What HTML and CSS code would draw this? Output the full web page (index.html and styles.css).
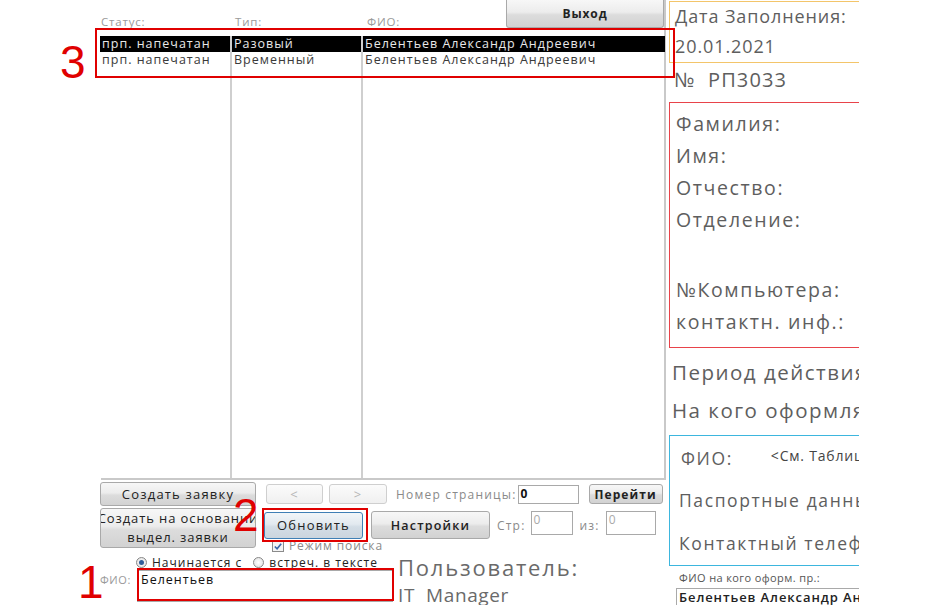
FILE: index.html
```html
<!DOCTYPE html>
<html lang="ru">
<head>
<meta charset="utf-8">
<title>Заявки</title>
<link rel="stylesheet" href="styles.css">
</head>
<body>
<div class="app">
  <div class="left">
    <div class="top">
      <div class="head">
        <div class="hl hl1">Статус:</div>
        <div class="hl hl2">Тип:</div>
        <div class="hl hl3">ФИО:</div>
        <button class="btn btn-exit">Выход</button>
      </div>
      <div class="grid">
        <div class="col c1">
          <div class="cell sel">прп. напечатан</div>
          <div class="cell">прп. напечатан</div>
        </div>
        <div class="col c2">
          <div class="cell sel">Разовый</div>
          <div class="cell">Временный</div>
        </div>
        <div class="col c3">
          <div class="cell sel">Белентьев Александр Андреевич</div>
          <div class="cell">Белентьев Александр Андреевич</div>
        </div>
      </div>
    </div>
    <div class="bottom">
      <div class="row1">
        <button class="btn btn-create">Создать заявку</button>
        <button class="btn btn-nav" disabled>&lt;</button>
        <button class="btn btn-nav btn-nav2" disabled>&gt;</button>
        <span class="lbl lbl-page">Номер страницы:</span>
        <div class="inp inp-page">0</div>
        <button class="btn btn-go">Перейти</button>
      </div>
      <div class="row2">
        <button class="btn btn-based">Создать на основании<br>выдел. заявки</button>
        <div class="row2r">
          <div class="row2btns">
            <button class="btn btn-refresh">Обновить</button>
            <button class="btn btn-settings">Настройки</button>
            <span class="lbl lbl-str">Стр:</span>
            <div class="inp inp-str">0</div>
            <span class="lbl lbl-iz">из:</span>
            <div class="inp inp-iz">0</div>
          </div>
          <div class="chkrow"><span class="chk"><svg width="11" height="11" viewBox="0 0 11 11"><path d="M2 5.5 L4.5 8 L9 2.5" fill="none" stroke="#3a66a8" stroke-width="1.8"/></svg></span><span class="chklbl">Режим поиска</span></div>
        </div>
      </div>
      <div class="row3">
        <div class="search">
          <div class="radios">
            <span class="radio on"></span><span class="rlbl">Начинается с</span>
            <span class="radio"></span><span class="rlbl">встреч. в тексте</span>
          </div>
          <div class="fio">
            <span class="fiolbl">ФИО:</span>
            <div class="inp inp-fio">Белентьев</div>
          </div>
        </div>
        <div class="user">
          <div class="user-t">Пользователь:</div>
          <div class="user-n">IT&nbsp; Manager</div>
        </div>
      </div>
    </div>
  </div>
  <div class="right">
    <div class="box box-date">
      <div class="d1">Дата Заполнения:</div>
      <div class="d2">20.01.2021</div>
    </div>
    <div class="num">№ &nbsp;РП3033</div>
    <div class="box box-person">
      <div class="pl">Фамилия:</div>
      <div class="pl">Имя:</div>
      <div class="pl">Отчество:</div>
      <div class="pl">Отделение:</div>
      <div class="pl pl-gap">№Компьютера:</div>
      <div class="pl">контактн. инф.:</div>
    </div>
    <div class="sec sec1">Период действия пропуска:</div>
    <div class="sec sec2">На кого оформляется:</div>
    <div class="box box-who">
      <div class="wrow"><span class="wl">ФИО:</span><span class="ws">&lt;См. Таблицу&gt;</span></div>
      <div class="wl wl2">Паспортные данные:</div>
      <div class="wl wl3">Контактный телефон:</div>
    </div>
    <div class="small">ФИО на кого оформ. пр.:</div>
    <div class="inp inp-who">Белентьев Александр Андреевич</div>
  </div>

  <div class="mark mark3"></div>
  <div class="digit d-3">3</div>
  <div class="mark mark2"></div>
  <div class="digit d-2">2</div>
  <div class="mark mark1"></div>
  <div class="digit d-1">1</div>
</div>
</body>
</html>
```

FILE: styles.css
```css
* { box-sizing: border-box; }
html, body { margin: 0; padding: 0; background: #fff; }
body {
  width: 937px; height: 605px; overflow: hidden;
  font-family: "Open Sans", "Noto Sans", sans-serif;
  font-size: 12px; color: #333;
}
.app {
  position: relative;
  display: flex;
  width: 937px; height: 605px;
  padding-left: 100px;
}
.left { width: 566px; display: flex; flex-direction: column; }
.top { border-right: 2px solid #c9c9c9; }
.head {
  display: grid;
  grid-template-columns: 129px 131px 146px 158px;
  height: 35px;
}
.hl {
  align-self: end;
  font-size: 11.5px; color: #9a9a9a; letter-spacing: 0.8px;
  line-height: 14px; padding-bottom: 6px;
}
.hl1 { padding-left: 1px; }
.hl2 { padding-left: 6px; }
.hl3 { padding-left: 7px; }
.btn {
  font-family: inherit; font-size: 13px; color: #222; letter-spacing: 1.2px;
  border: 1px solid #a9a9a9; border-radius: 3px;
  background: linear-gradient(#f7f7f7, #ececec 45%, #dcdcdc 55%, #d2d2d2);
  padding: 0; margin: 0;
  display: flex; align-items: center; justify-content: center;
}
.btn-exit { height: 28px; font-weight: 700; font-size: 12px; letter-spacing: 0.9px; border-top: none; border-radius: 0 0 3px 3px; }
.grid {
  display: grid;
  grid-template-columns: 129px 131px 304px;
  height: 445px;
  border-bottom: 2px solid #c9c9c9;
  margin-left: 1px;
  padding-top: 1px;
}
.col { display: flex; flex-direction: column; }
.c1 { margin-left: -1px; }
.c2, .c3 { border-left: 2px solid #cfcfcf; }
.cell {
  height: 16px; line-height: 16px;
  font-size: 12.5px; letter-spacing: 1px; color: #3a3a3a;
  padding-left: 2px; white-space: nowrap; overflow: hidden;
}
.cell.sel { background: #000; color: #e8e8e8; }

.bottom { display: flex; flex-direction: column; }
.row1 { display: flex; align-items: center; margin-top: 2px; height: 24px; }
.btn-create { width: 156px; height: 24px; }
.btn-nav {
  width: 57px; height: 20px; margin-left: 10px;
  color: #b5b5b5; border-color: #cfcfcf;
  background: linear-gradient(#fbfbfb, #f0f0f0);
}
.btn-nav2 { width: 58px; margin-left: 6px; }
.lbl { color: #8a8a8a; font-size: 12px; letter-spacing: 1.2px; white-space: nowrap; }
.lbl-page { margin-left: 9px; }
.inp {
  border: 1px solid #a9a9a9; background: #fff; font-size: 12px;
  letter-spacing: 0.6px; color: #111; padding-left: 2px; line-height: 16px;
  white-space: nowrap; overflow: hidden;
}
.inp-page { width: 61px; height: 19px; margin-left: 1px; font-weight: 700; }
.btn-go { width: 74px; height: 20px; margin-left: 10px; font-weight: 700; font-size: 12px; letter-spacing: 1.1px; }

.row2 { display: flex; margin-top: 2px; height: 45px; }
.btn-based { width: 156px; height: 40px; line-height: 19px; text-align: center; flex-direction: column; letter-spacing: 0.9px; overflow: hidden; white-space: nowrap; }
.row2r { margin-left: 8px; display: flex; flex-direction: column; }
.row2btns { display: flex; align-items: center; margin-top: 3px; height: 28px; }
.btn-refresh {
  width: 99px; height: 27px;
  border-color: #3f7fb5;
  background: linear-gradient(#f2f6f9, #e2e9ef 45%, #d3dde6 55%, #cbd5de);
}
.btn-settings { width: 119px; height: 28px; margin-left: 8px; font-weight: 600; font-size: 12.5px; }
.lbl-str { margin-left: 7px; }
.inp-str, .inp-iz { height: 24px; color: #aaa; align-self: flex-start; }
.inp-str { width: 42px; margin-left: 5px; }
.lbl-iz { margin-left: 7px; }
.inp-iz { width: 50px; margin-left: 6px; }
.chkrow { display: flex; align-items: center; height: 12px; margin-top: 1px; margin-left: 8px; }
.chk {
  width: 12px; height: 11px; border: 1px solid #8b8b8b; background: #f4f4f4;
  display: flex; align-items: center; justify-content: center;
}
.chklbl { color: #8a8a8a; font-size: 12px; letter-spacing: 0.9px; margin-left: 5px; line-height: 12px; }

.row3 { display: flex; margin-top: 1px; }
.search { width: 298px; display: flex; flex-direction: column; }
.radios { display: flex; align-items: center; height: 14px; padding-left: 36px; margin-top: 1px; }
.radio {
  width: 11px; height: 11px; border-radius: 50%;
  border: 1px solid #888; background: radial-gradient(#fff, #ddd);
  position: relative;
}
.radio.on::after {
  content: ""; position: absolute; left: 2px; top: 2px; width: 5px; height: 5px;
  border-radius: 50%; background: #2f5d9a;
}
.rlbl { margin-left: 5px; margin-right: 11px; color: #222; letter-spacing: 1px; font-size: 12px; }
.fio { display: flex; margin-top: 1px; }
.fiolbl { width: 37px; font-size: 11px; color: #9a9a9a; letter-spacing: 0.6px; padding-top: 2px; }
.inp-fio { width: 256px; height: 32px; padding-left: 3px; padding-top: 1px; font-size: 12.5px; letter-spacing: 1px; }
.user { color: #6a6a6a; }
.user-t { font-size: 22px; letter-spacing: 1.8px; line-height: 26px; }
.user-n { font-size: 19px; letter-spacing: 0.6px; line-height: 24px; margin-top: 3px; }

.right {
  width: 193px; height: 605px; overflow: hidden;
  padding-left: 3px; color: #5e5e5e; letter-spacing: 1.6px;
}
.box { width: 260px; border: 1px solid; }
.box-date { border-color: #f3c56a; margin-top: 1px; height: 62px; padding-left: 5px; font-size: 18px; letter-spacing: 0.9px; }
.d1 { line-height: 28px; }
.d2 { line-height: 32px; }
.num { height: 39px; line-height: 34px; font-size: 20px; padding-left: 5px; letter-spacing: 1.1px; }
.box-person { border-color: #e8434a; height: 246px; padding: 5px 0 0 6px; font-size: 19.5px; letter-spacing: 1.6px; }
.pl { line-height: 32px; white-space: nowrap; }
.pl-gap { margin-top: 38px; }
.sec { font-size: 20.5px; white-space: nowrap; padding-left: 3px; letter-spacing: 1.5px; }
.sec1 { margin-top: 10px; line-height: 28px; }
.sec2 { margin-top: 10px; line-height: 28px; }
.box-who { border-color: #3db6de; height: 131px; margin-top: 11px; padding-left: 11px; font-size: 17.5px; white-space: nowrap; letter-spacing: 1.6px; }
.wrow { display: flex; align-items: center; height: 42px; padding-top: 2px; }
.ws { font-size: 14px; margin-left: 38px; margin-top: -5px; color: #444; letter-spacing: 0.8px; }
.wl2 { margin-left: -2px; line-height: 44px; }
.wl3 { margin-left: -2px; line-height: 42px; }
.small { font-size: 11px; letter-spacing: 0.4px; color: #555; padding-left: 10px; margin-top: 5px; line-height: 14px; }
.inp-who { margin-left: 7px; margin-top: 3px; width: 260px; height: 20px; font-size: 13px; font-weight: 600; color: #222; letter-spacing: 0.9px; border-right: none; border-bottom: none; padding-left: 2px; }

.mark { position: absolute; border: 2px solid #e00000; }
.mark3 { left: 95px; top: 28px; width: 580px; height: 50px; }
.mark2 { left: 262px; top: 508px; width: 106px; height: 34px; }
.mark1 { left: 137px; top: 568px; width: 257px; height: 33px; }
.digit {
  position: absolute; color: #e00000; font-family: "Liberation Sans", sans-serif;
  font-size: 46px; line-height: 46px;
}
.d-3 { left: 60px; top: 39px; }
.d-2 { left: 233px; top: 492px; }
.d-1 { left: 78px; top: 559px; }
```
